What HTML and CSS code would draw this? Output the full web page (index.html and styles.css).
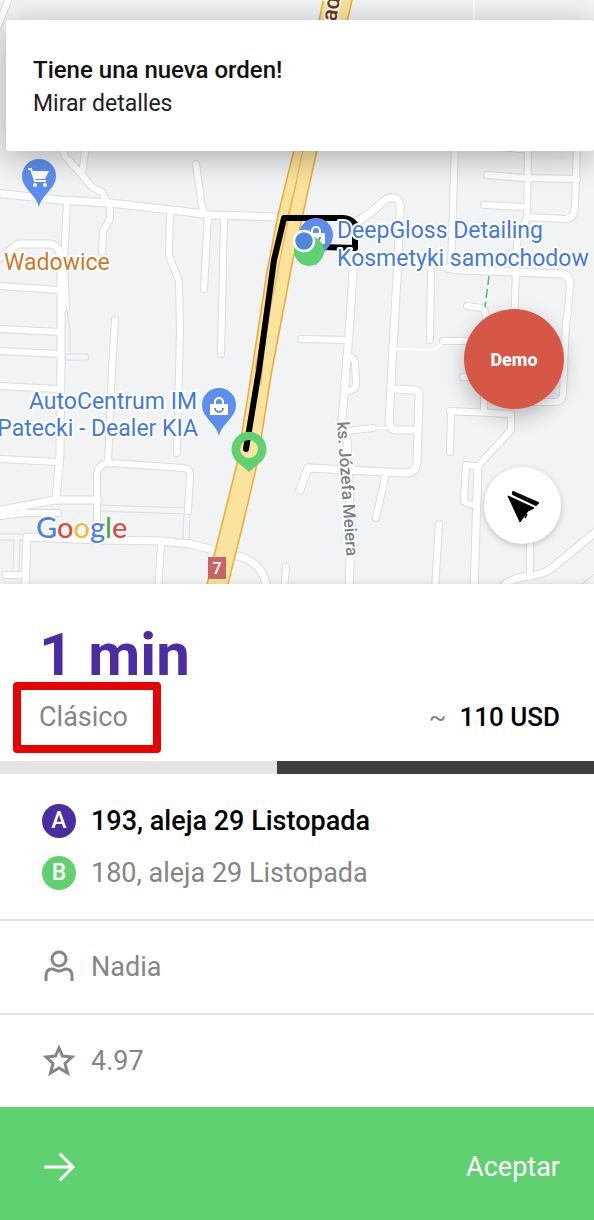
FILE: index.html
```
<!DOCTYPE html>
<html lang="es">
<head>
  <meta charset="UTF-8" />
  <meta name="viewport" content="width=device-width, initial-scale=1.0"/>
  <title>Nueva orden</title>
  <link rel="stylesheet" href="styles.css">
</head>
<body>
  <main class="map">
    <svg class="map-canvas" viewBox="0 0 594 584" preserveAspectRatio="xMidYMid slice" role="img" aria-label="Mapa de la ruta">
      <defs>
        <g id="side-streets">
          <path d="M9 -2L-6 36M86 145L82 175M61 145L65 156L82 175L92 187L102 192L107 203M67 203L64 262L66 308M110 204V219L103 231L102 252"/>
          <path d="M0 286L60 290M0 329L60 332M0 351L60 354M0 386L58 389M0 459L57 462M115 320L112 370L108 463"/>
          <path d="M170 212L169 256L179 281L180 330L177 453M196 164L203 214M208 215L204 289M224 216L221 354"/>
          <path d="M97 522V475Q98 463 110 463L184 468Q190 469 190 475L188 511M0 516L25 513H58M23 505V513M5 575H25M161 545L158 590M286 567L284 590"/>
          <path d="M301 339L348 340M346 360Q352 352 355 363L356 384Q356 391 345 391M345 431L373 428M431 265L430 340M455 145L451 268"/>
          <path d="M484 145L528 150M487 175L524 178L577 179M484 205L525 207M528 145L527 218M577 145L575 205Q575 219 565 219L527 217L517 242L514 325"/>
          <path d="M467 306L482 308Q486 310 486 320M443 341H470M463 377H475M570 285L567 320M484 395V412"/>
          <path d="M450 452L451 411L511 414V430L478 466M478 467L466 465L464 500Q464 504 476 505M450 411L464 412M386 473L376 518M439 524L435 590M530 540V575M566 320L563 395Q562 402 554 402H525"/>
        </g>
        <g id="main-streets">
          <path d="M-4 193L60 200L110 203L180 211L210 215L278 217"/>
          <path d="M-4 261L18 244L50 244Q60 245 61 260L61 365L60 455L56 499M-4 511L55 500H98"/>
          <path d="M25 590L27 537L100 540L160 541L190 544L218 551M233 555Q264 560 267 590"/>
          <path d="M354 224L370 213L384 201Q392 195 398 200Q401 203 400 214L398 260L392 365L389 423Q390 430 396 430H416M391 389L415 390Q419 391 419 395L417 463Q415 473 406 473L308 468L300 490"/>
          <path d="M354 258L350 320L342 420L347 440L351 530L349 590"/>
          <path d="M447 268L460 270L515 272L562 274Q570 275 570 285M478 466L474 590M500 590Q508 578 530 576Q544 574 552 568L598 530"/>
        </g>
        <g id="lanes">
          <path d="M99 508L187 511M187 511L186 543M0 537H26M17 538L16 570M68 357H86"/>
        </g>
        <path id="pin" d="M0 31C-3 18 -17 13 -17 0A17 17 0 0 1 17 0C17 13 3 18 0 31Z"/>
        <g id="bag">
          <path d="M-9 -2H9V9H-9Z" fill="#fff"/>
          <path d="M-4 -1V-4A4 4 0 0 1 4 -4V-1" fill="none" stroke="#fff" stroke-width="2"/>
          <path d="M-4 2A4 4 0 0 0 4 2" fill="none" stroke="#5d8eed" stroke-width="2"/>
        </g>
      </defs>

      <rect width="594" height="584" fill="#f1f3f5"/>

      <!-- streets: outline first, then the fill -->
      <g class="roads lane-edge"><use href="#lanes"/></g>
      <g class="roads lane-fill"><use href="#lanes"/></g>
      <g class="roads side-edge"><use href="#side-streets"/></g>
      <g class="roads main-edge"><use href="#main-streets"/></g>
      <g class="roads side-fill"><use href="#side-streets"/></g>
      <g class="roads main-fill"><use href="#main-streets"/></g>
      <path class="roads thin-road" d="M396 349L434 350L441 344M375 428H389M474 0V20"/>
      <path class="roads thin-edge" d="M66 305L70 330V352M580 586L598 571"/>
      <path d="M489 276L485 307" fill="none" stroke="#5fb574" stroke-width="1.5" stroke-dasharray="9 4"/>

      <!-- highway -->
      <path d="M324 -4L294 150L278 215L267 272L252 370L237 464L206 588H227L244 520L257 464L272 370L292 264L317 150L353 -4Z" fill="#fae39c" stroke="#edaa38" stroke-width="1.5"/>
      <path d="M303 150L284 240L264 340L261 385M297 180L274 270L255 370" fill="none" stroke="#edb044"/>
      <rect x="208" y="557" width="18" height="22" fill="#c96464"/>
      <text class="shield" x="217" y="574" text-anchor="middle">7</text>
      <text class="road-name" transform="translate(336 22) rotate(-80)">ad</text>
      <text class="street-name" transform="translate(337 422) rotate(86)">ks. Józefa Meiera</text>

      <!-- places and route -->
      <use href="#pin" x="39" y="176" fill="#5d8eed"/>
      <g transform="translate(39 177)">
        <path d="M-11 -8H-8L-4 4H7" fill="none" stroke="#fff" stroke-width="2"/>
        <path d="M-7 -6H10L6 2H-4Z" fill="#fff"/>
        <circle cx="-4" cy="8" r="2" fill="#fff"/>
        <circle cx="6" cy="8" r="2" fill="#fff"/>
      </g>
      <path d="M246 449L259 370L274 260L284 218H343Q350 218 355 224V248L322 247" fill="none" stroke="#000" stroke-width="6" stroke-linecap="round" stroke-linejoin="round"/>
      <use href="#pin" x="316" y="235" fill="#5d8eed"/>
      <use href="#bag" x="316" y="235"/>
      <circle cx="309" cy="251" r="15" fill="#60d171"/>
      <circle cx="304" cy="241" r="10" fill="#4f87dc" stroke="#fff" stroke-width="2.5"/>
      <use href="#pin" x="219" y="405" fill="#5d8eed"/>
      <use href="#bag" x="219" y="406"/>
      <path fill-rule="evenodd" fill="#60d171" d="M249 472L236 461A17.500 17.500 0 1 1 262 461ZM249 440A9 9 0 1 0 249 458A9 9 0 1 0 249 440Z"/>

      <text class="place town" x="4" y="270">Wadowice</text>
      <text class="place" x="337" y="238">DeepGloss Detailing</text>
      <text class="place" x="337" y="266">Kosmetyki samochodow</text>
      <text class="place" x="197" y="409" text-anchor="end">AutoCentrum IM</text>
      <text class="place" x="198" y="436" text-anchor="end">Patecki - Dealer KIA</text>
      <text class="google" x="36" y="538"><tspan fill="#4a7fec">G</tspan><tspan fill="#d94a3d">o</tspan><tspan fill="#f2bb3c">o</tspan><tspan fill="#4a7fec">g</tspan><tspan fill="#4ba65a">l</tspan><tspan fill="#d94a3d">e</tspan></text>
    </svg>

    <a class="notice" href="#orden">
      <strong>Tiene una nueva orden!</strong>
      <span>Mirar detalles</span>
    </a>
    <button class="demo" type="button">Demo</button>
    <button class="locate" type="button" aria-label="Mi ubicación">
      <svg width="36" height="36" viewBox="0 0 36 36">
        <path d="M3 8L29 20L23 23L20 27L15 34Z" stroke="#000" stroke-linejoin="round"/>
        <path d="M8 4L33 15L31 17L8 6Z" stroke="#000" stroke-width="2" stroke-linejoin="round"/>
        <path d="M22 26L20 30" stroke="#000" stroke-width="1.5"/>
      </svg>
    </button>
  </main>

  <section class="order" id="orden">
    <header class="summary">
      <h1>1 min</h1>
      <div class="fare">
        <span class="tariff">Clásico</span>
        <span class="price"><span class="approx">~</span>110 USD</span>
      </div>
    </header>
    <div class="timer" role="progressbar" aria-label="Tiempo restante" aria-valuenow="53">
      <div class="timer-left" style="width: 53.300%"></div>
    </div>
    <div class="stops">
      <div class="row from"><span class="stop">A</span>193, aleja 29 Listopada</div>
      <div class="row"><span class="stop stop-b">B</span>180, aleja 29 Listopada</div>
    </div>
    <div class="row detail">
      <svg class="icon" width="34" height="34" viewBox="0 0 34 34">
        <circle cx="17" cy="9" r="7"/>
        <path d="M4 31V26Q4 19 10 19Q12 19 13 20Q17 22 21 20Q22 19 24 19Q30 19 30 26V31"/>
      </svg>
      Nadia
    </div>
    <div class="row detail">
      <svg class="icon" width="34" height="34" viewBox="0 0 34 34">
        <path d="M17 4L20.500 12L30 13L23 19.500L25.500 29L17 24L8.500 29L11 19.500L4 13L13.500 12Z"/>
      </svg>
      4.97
    </div>
    <button class="accept" type="button">
      <svg class="icon" width="34" height="34" viewBox="0 0 34 34">
        <path d="M2 17H31M17.500 3.500L31 17L17.500 30.500"/>
      </svg>
      Aceptar
    </button>
  </section>
</body>
</html>
```
FILE: styles.css
```
    * {
      box-sizing: border-box;
    }
    body {
      margin: 0;
      min-height: 100vh;
      display: flex;
      flex-direction: column;
      font-family: Roboto, sans-serif;
      font-size: 27px;
      line-height: 32px;
      color: #858585;
      background: #fff;
    }
    button {
      border: none;
      font-family: inherit;
      cursor: pointer;
    }

    /* map */
    .map {
      position: relative;
      flex: 1;
      min-height: 480px;
      overflow: hidden;
    }
    .map-canvas {
      position: absolute;
      width: 100%;
      height: 100%;
    }
    .roads {
      fill: none;
      stroke-linecap: round;
      stroke-linejoin: round;
    }
    .side-edge {
      stroke: #dbdce1;
      stroke-width: 8px;
    }
    .side-fill {
      stroke: #fff;
      stroke-width: 6px;
    }
    .main-edge {
      stroke: #dbdce1;
      stroke-width: 9px;
    }
    .main-fill {
      stroke: #fff;
      stroke-width: 7px;
    }
    .lane-edge {
      stroke: #dbdce1;
      stroke-width: 7px;
    }
    .lane-fill {
      stroke: #f4f5f7;
      stroke-width: 5px;
    }
    .thin-road {
      stroke: #fff;
      stroke-width: 2px;
    }
    .thin-edge {
      stroke: #dddee3;
      stroke-width: 1px;
    }
    .place {
      font-size: 23px;
      fill: #4379e0;
      stroke: #fff;
      stroke-width: 4px;
      stroke-linejoin: round;
      paint-order: stroke;
    }
    .town {
      fill: #cb7a2c;
    }
    .street-name {
      font-size: 17px;
      font-weight: 500;
      fill: #7b7f85;
      stroke: #fff;
      stroke-width: 3px;
      paint-order: stroke;
    }
    .road-name {
      font-size: 22px;
      font-weight: 500;
      fill: #6b3a11;
      stroke: #fff;
      stroke-width: 3px;
      paint-order: stroke;
    }
    .shield {
      font-size: 16px;
      font-weight: 500;
      fill: #fff;
    }
    .google {
      font-family: Lato, sans-serif;
      font-size: 29px;
      font-weight: 500;
      stroke: #fff;
      stroke-width: 3px;
      paint-order: stroke;
    }
    .notice {
      position: absolute;
      top: 20px;
      left: 6px;
      right: 0;
      display: flex;
      flex-direction: column;
      padding: 34px 27px 31px;
      border-radius: 3px;
      background: #fff;
      box-shadow: 0 6px 32px rgba(0, 0, 0, 0.3);
      font-size: 23px;
      line-height: 33px;
      color: #202124;
      text-decoration: none;
    }
    .notice strong {
      font-size: 24px;
      font-weight: 500;
      color: #111;
    }
    .demo {
      position: absolute;
      right: 30px;
      bottom: 175px;
      width: 100px;
      height: 100px;
      padding: 0;
      border-radius: 50%;
      background: #d65745;
      box-shadow: 0 8px 20px rgba(0, 0, 0, 0.25);
      font-size: 18px;
      font-weight: 800;
      color: #fff;
    }
    .locate {
      position: absolute;
      right: 33px;
      bottom: 40px;
      display: flex;
      align-items: center;
      justify-content: center;
      width: 77px;
      height: 77px;
      padding: 0;
      border-radius: 50%;
      background: #fff;
      box-shadow: 0 2px 6px rgba(0, 0, 0, 0.2);
    }

    /* order */
    .order {
      position: relative;
      background: #fff;
      box-shadow: 0 0 8px rgba(0, 0, 0, 0.12);
    }
    .summary {
      padding: 39px 34px 28px 39px;
    }
    h1 {
      margin: 0;
      font-size: 60px;
      line-height: 64px;
      font-weight: 700;
      color: #4b2ca3;
    }
    .fare {
      display: flex;
      justify-content: space-between;
      padding-top: 14px;
    }
    .tariff {
      position: relative;
    }
    .tariff::after {
      content: "";
      position: absolute;
      inset: -19px -33px -20px -26px;
      border: 8px solid #e60202;
      border-radius: 4px;
    }
    .price {
      font-size: 26px;
      font-weight: 500;
      color: #000;
    }
    .approx {
      margin-right: 13px;
      font-weight: 400;
      color: #858585;
    }
    .timer {
      display: flex;
      justify-content: flex-end;
      height: 13px;
      background: #e4e4e4;
    }
    .timer-left {
      background: #3f3f3f;
    }
    .row {
      display: flex;
      align-items: center;
      gap: 15px;
    }
    .stops {
      display: flex;
      flex-direction: column;
      gap: 18px;
      padding: 30px 42px 29px;
    }
    .from {
      font-weight: 500;
      color: #000;
    }
    .stop {
      display: flex;
      align-items: center;
      justify-content: center;
      width: 34px;
      height: 34px;
      border-radius: 50%;
      background: #4b2ca3;
      font-size: 23px;
      font-weight: 500;
      color: #fff;
    }
    .stop-b {
      background: #60d171;
    }
    .detail {
      padding: 29px 42px;
      border-top: 2px solid #e2e2e2;
    }
    .icon {
      fill: none;
      stroke: currentColor;
      stroke-width: 3px;
    }
    .accept {
      display: flex;
      align-items: center;
      justify-content: space-between;
      width: 100%;
      height: 113px;
      padding: 6px 34px 0 42px;
      background: #60d171;
      font-size: 27px;
      color: #fff;
    }
```
